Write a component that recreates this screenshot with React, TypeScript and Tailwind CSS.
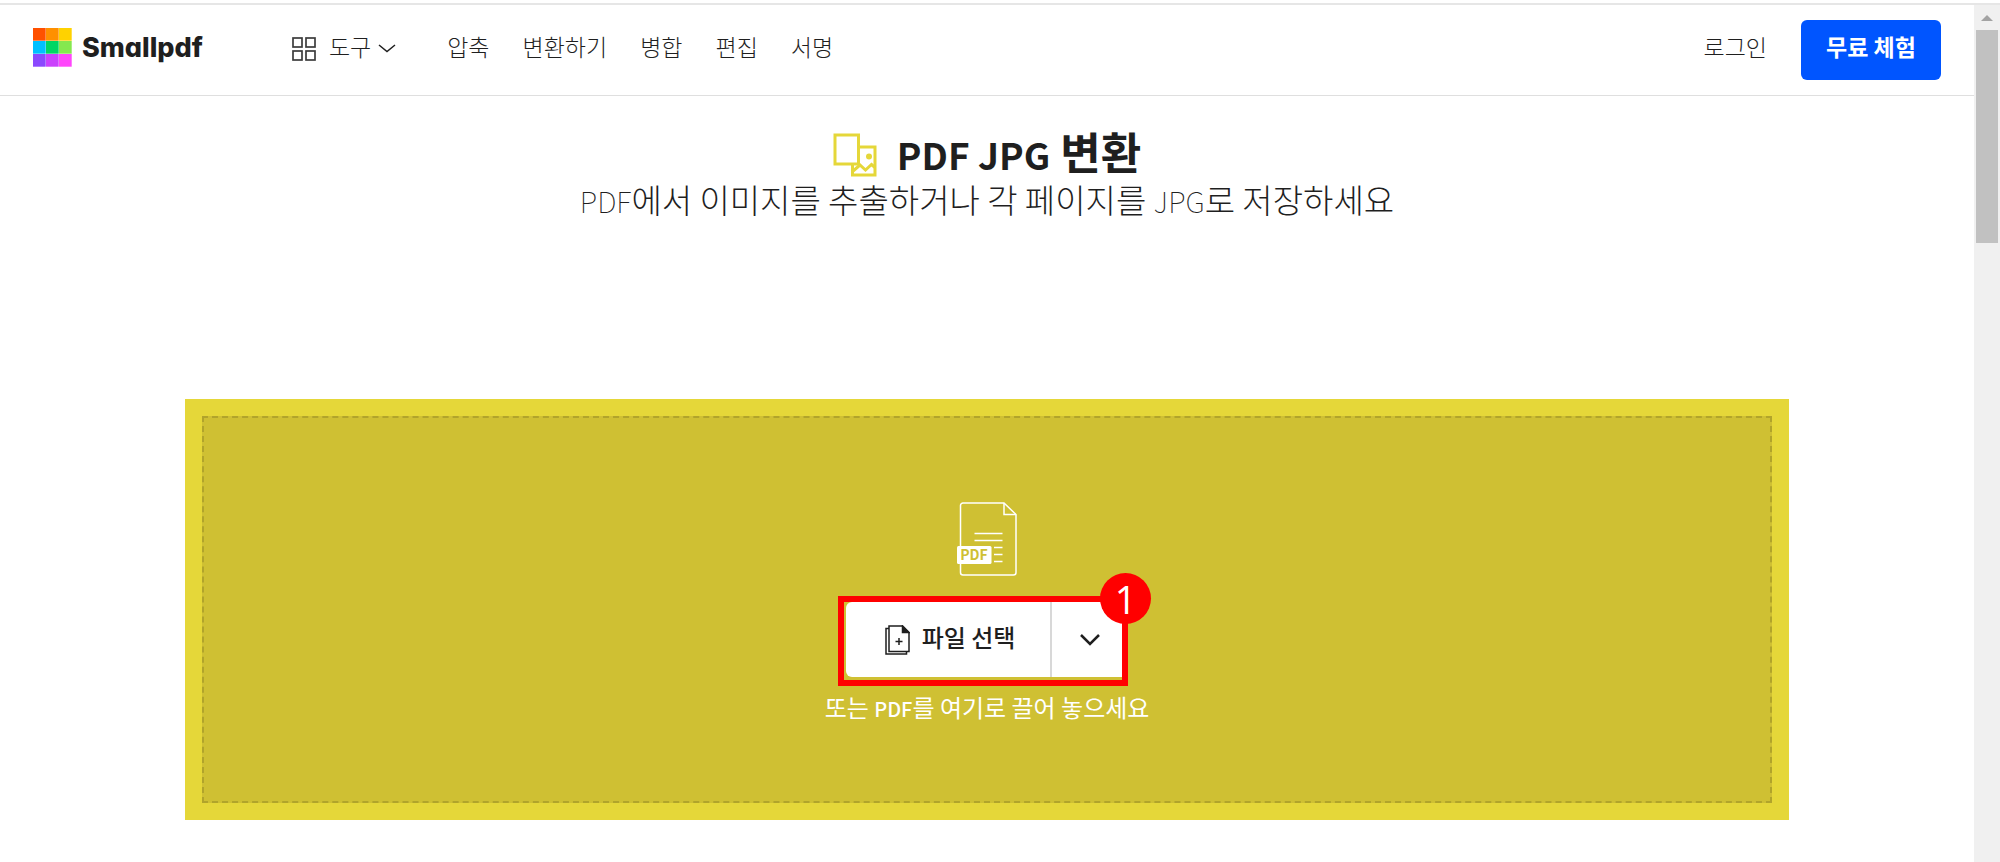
import { ReactNode } from 'react';

const logoColors = [
  '#ff5000', '#ff9000', '#ffd200',
  '#00c0ff', '#00d664', '#85e84f',
  '#8b48fe', '#ca41fc', '#ff46fb',
];

const navLinks = ['압축', '변환하기', '병합', '편집', '서명'];

function LogoMark() {
  return (
    <svg width="39" height="39" viewBox="0 0 39 39" aria-hidden="true">
      {logoColors.map((color, i) => (
        <rect
          key={color}
          x={(i % 3) * 13}
          y={Math.floor(i / 3) * 13}
          width="12.7"
          height="12.7"
          fill={color}
        />
      ))}
    </svg>
  );
}

function GridIcon() {
  return (
    <svg width="24" height="24" viewBox="0 0 24 24" fill="none" stroke="#3c3c3c" strokeWidth="1.7" className="mt-1.5" aria-hidden="true">
      <rect x="1" y="1" width="9" height="9" />
      <rect x="14" y="1" width="9" height="9" />
      <rect x="1" y="14" width="9" height="9" />
      <rect x="14" y="14" width="9" height="9" />
    </svg>
  );
}

function ConvertIcon() {
  return (
    <svg width="44" height="44" viewBox="0 0 44 44" fill="none" stroke="#e5d739" strokeWidth="3" aria-hidden="true">
      <rect x="2" y="2" width="23.5" height="29" />
      <path d="M25.5 14H42v28H19.5V31" />
      <path d="M19.5 38.5l7.500-6.500 5.500 5 6-5.500 3.500 3" />
      <circle cx="36" cy="23.5" r="3" fill="#e5d739" stroke="none" />
    </svg>
  );
}

function PdfFileIcon() {
  return (
    <svg width="60" height="74" viewBox="0 0 60 74" fill="none" stroke="#fff" strokeWidth="1.5" aria-hidden="true">
      <path d="M47 1H6a2.500 2.500 0 0 0-2.500 2.500v67A2.500 2.500 0 0 0 6 73h50.500a2.500 2.500 0 0 0 2.500-2.500V12.500z" />
      <path d="M47 1v11.500h12" />
      <path d="M17.500 31.500h28M17.500 38.500h28M37 45.500h8.500M37 52.500h8.500M37 59.500h8.500" />
      <rect x="0" y="44" width="34.500" height="18" rx="1.500" fill="#fff" stroke="none" />
      <text
        x="17"
        y="58"
        textAnchor="middle"
        fontSize="14"
        fontWeight="700"
        fontFamily="'Noto Sans CJK KR', sans-serif"
        fill="#cfc033"
        stroke="none"
      >
        PDF
      </text>
    </svg>
  );
}

function AddFileIcon() {
  return (
    <svg width="25" height="30" viewBox="0 0 25 30" fill="none" stroke="#1f1f1f" strokeWidth="1.500" aria-hidden="true">
      <path d="M17.500 1H4v25.500h20V7.500z" />
      <path d="M17.500 1v6.500H24z" fill="#1f1f1f" />
      <path d="M4 3.500H1V29h20.500v-2.500" />
      <path d="M14 13v7M10.500 16.500h7" />
    </svg>
  );
}

function Latin({ className, children }: { className: string; children: ReactNode }) {
  return <span className={`inline-block leading-none ${className}`}>{children}</span>;
}

function Header() {
  return (
    <header className="flex h-[91px] items-center border-b border-[#dfdfdf] px-[33px]">
      <a href="#" className="flex items-center gap-[10px] pb-1.5">
        <LogoMark />
        <span className="pt-0.5 font-['Inter',sans-serif] text-[27px] leading-8 font-extrabold text-[#1f1f1f] [font-feature-settings:'cv11']">
          Smallpdf
        </span>
      </a>
      <nav className="ml-[89px] flex items-center gap-[33px] pb-2 text-[23px] leading-8 font-light text-[#1f1f1f]">
        <button type="button" className="mr-[18px] flex items-center">
          <GridIcon />
          <span className="mr-[7px] ml-[13px]">도구</span>
          <svg width="18" height="9" viewBox="0 0 18 9" fill="none" stroke="#1f1f1f" strokeWidth="1.5" className="mt-1" aria-hidden="true">
            <path d="M1 1l8 6.500L17 1" />
          </svg>
        </button>
        {navLinks.map((link) => (
          <a key={link} href="#">
            {link}
          </a>
        ))}
      </nav>
      <div className="ml-auto flex items-center gap-[34px]">
        <a href="#" className="pb-2 text-[23px] leading-8 font-light text-[#1f1f1f]">
          로그인
        </a>
        <button type="button" className="h-[60px] w-[140px] rounded-md bg-[#0055ff] pb-2 text-[23px] leading-8 font-bold text-white">
          무료 체험
        </button>
      </div>
    </header>
  );
}

function FilePicker() {
  return (
    <div className="relative flex h-[75px] w-[282px]">
      <button
        type="button"
        className="flex flex-1 items-center justify-center gap-3 rounded-l-md border-r-2 border-[#d8d8d8] bg-white pl-1 text-2xl font-medium text-[#1f1f1f]"
      >
        <AddFileIcon />
        <span className="pb-1.5">파일 선택</span>
      </button>
      <button type="button" aria-label="더 보기" className="flex w-[76px] items-center justify-center bg-white">
        <svg width="20" height="12" viewBox="0 0 20 12" fill="none" stroke="#1f1f1f" strokeWidth="2.5" aria-hidden="true">
          <path d="M1 1l9 9 9-9" />
        </svg>
      </button>
      {/* step marker drawn over the control */}
      <div className="pointer-events-none absolute -top-1.5 right-0 -bottom-[9px] -left-2 border-6 border-[#ff0000]" />
      <span className="absolute -top-[29px] -right-[23px] flex size-[51px] items-center justify-center rounded-full bg-[#ff0000] font-['Open_Sans',sans-serif] text-[38px] leading-none text-white">
        1
      </span>
    </div>
  );
}

function Dropzone() {
  return (
    <section className="mx-auto w-[calc(100%-370px)] bg-[#e5d739] p-[17px]">
      <div className="flex flex-col items-center border-2 border-dashed border-[#b1a42b] bg-[#cfc033] pt-[84px] pb-20">
        <PdfFileIcon />
        <div className="mt-[26px] mb-4">
          <FilePicker />
        </div>
        <p className="text-2xl leading-7 text-white">
          또는 <Latin className="text-[20px] font-medium">PDF</Latin>를 여기로 끌어 놓으세요
        </p>
      </div>
    </section>
  );
}

function Scrollbar() {
  return (
    <div className="flex w-[26px] shrink-0 flex-col items-center bg-[#f0f0f0]" aria-hidden="true">
      <svg width="12" height="6" viewBox="0 0 12 6" className="mt-[10px] mb-[9px]">
        <path d="M6 0l6 6H0z" fill="#a3a3a3" />
      </svg>
      <div className="h-[213px] w-[22px] bg-[#c1c1c1]" />
    </div>
  );
}

export default function App() {
  return (
    <div className="flex min-h-screen flex-col bg-white pt-[3px] font-['Noto_Sans_CJK_KR',sans-serif]">
      <div className="h-[2px] bg-[#e6e6e6]" />
      <div className="flex flex-1">
        <div className="min-w-0 flex-1">
          <Header />
          <main className="pt-[35px]">
            <h1 className="flex h-12 items-center justify-center gap-5 text-[44px] leading-none font-bold text-[#1f1f1f]">
              <ConvertIcon />
              <span className="pb-2">
                <Latin className="text-[37px]">PDF JPG</Latin> 변환
              </span>
            </h1>
            <p className="mb-[180px] text-center text-[33px] leading-10 font-light text-[#1f1f1f]">
              <Latin className="text-[29px] font-thin">PDF</Latin>에서 이미지를 추출하거나 각 페이지를{' '}
              <Latin className="text-[29px] font-thin">JPG</Latin>로 저장하세요
            </p>
            <Dropzone />
          </main>
        </div>
        <Scrollbar />
      </div>
    </div>
  );
}
